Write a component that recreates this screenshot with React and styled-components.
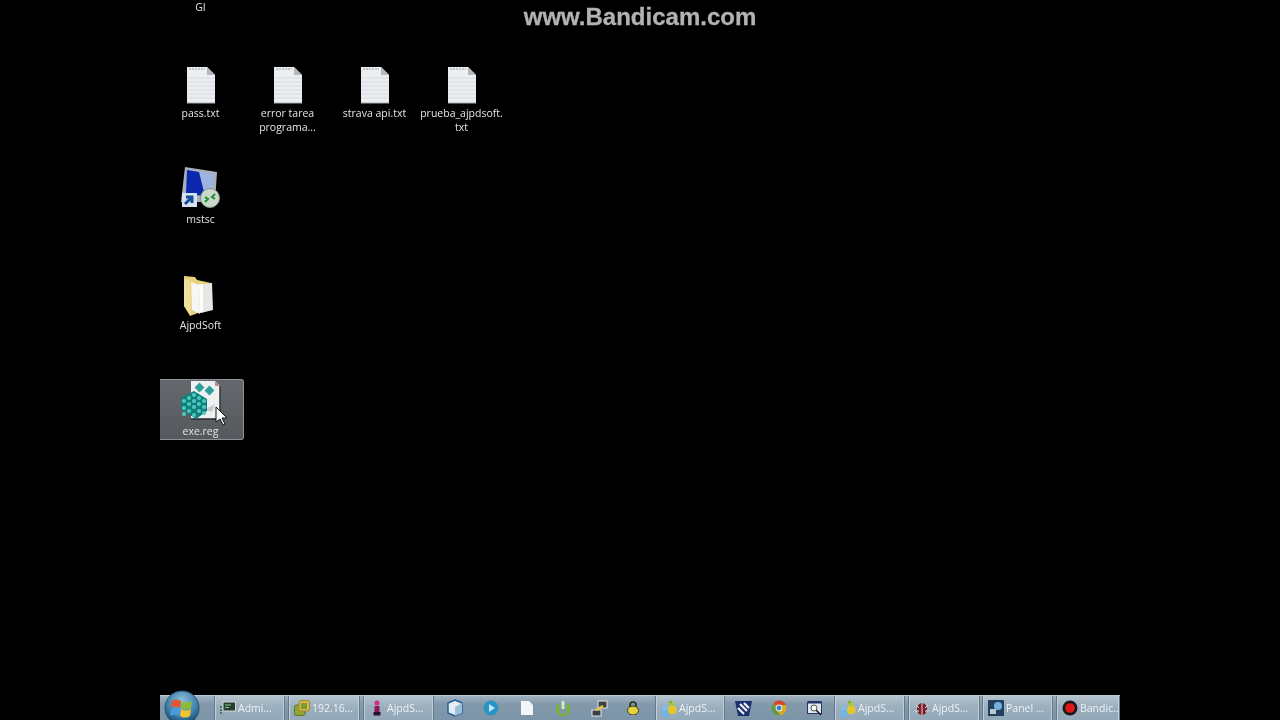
import React from "react";
import styled, { createGlobalStyle } from "styled-components";

const GlobalStyle = createGlobalStyle`
  html, body {
    margin: 0;
    height: 100%;
    background: #000;
    overflow: hidden;
  }
  #root {
    height: 100%;
  }
`;

const FileIcon = () => (
  <svg width="30" height="38" viewBox="0 0 30 38">
    <path d="M1 1h20l8 8v28H1z" fill="#eceff2" />
    <path d="M21 1l8 8h-8z" fill="#b4b9be" />
    {[12, 16, 20, 24, 28, 32].map((y) => (
      <path key={y} d={`M1 ${y}h28`} stroke="#d6dae0" strokeWidth="1" />
    ))}
    <path d="M3 3h16" stroke="#c2c6ca" strokeWidth="2" strokeDasharray="2 1" />
    <path d="M1 37h28" stroke="#a4aaaf" strokeWidth="1" />
  </svg>
);

const RdpIcon = () => (
  <svg width="42" height="44" viewBox="0 0 42 44">
    <path d="M5 1l32 5-2 30H1z" fill="#a9b0bd" />
    <path d="M7 4l27 4-2 23-26-3z" fill="#9db4e2" />
    <path d="M7 4l12 2 6 24-19-2z" fill="#0b28ad" />
    <rect x="2" y="27" width="15" height="14" fill="#d8e1ee" />
    <path d="M5 38l6-6M6 31h6v6" stroke="#12509f" strokeWidth="3" fill="none" />
    <circle cx="30" cy="32" r="9.5" fill="#ccd8cc" stroke="#7f9684" />
    <path d="M25 36l3-3-3-2M35 28l-3 3 3 2" stroke="#1f9436" strokeWidth="2" fill="none" />
  </svg>
);

const FolderIcon = () => (
  <svg width="36" height="40" viewBox="0 0 36 40">
    <path d="M1 0l11 1 2 3 14 3v25L7 40 1 30z" fill="#e6d37c" />
    <path d="M1 3l6 2 1 34-7-9z" fill="#efe09a" />
    <path d="M8 6l8 3 1 29-8-4z" fill="#f6f6f4" />
    <path d="M17 9l12-2 1 27-12 3z" fill="#e6e6e4" />
    <path d="M16 8h4v28l-3 1z" fill="#fcfcfb" />
  </svg>
);

const cubeDots = [
  [12, 13], [7, 16], [17, 16], [2, 19], [12, 19], [22, 19],
  [7, 22], [17, 22], [2, 26], [12, 25], [22, 25],
  [7, 29], [17, 29], [12, 33], [2, 32], [22, 31],
];

const RegIcon = () => (
  <svg width="42" height="42" viewBox="0 0 42 42">
    <path d="M11 1h24l5 5v33H11z" fill="#eef0f1" />
    <path d="M35 1l5 5h-5z" fill="#b88f8a" />
    <path d="M11 39h29" stroke="#20262a" strokeWidth="1.5" />
    <path d="M40 6v33" stroke="#30363a" strokeWidth="1.5" />
    <path d="M24 30l11-6-3 8z" fill="#c8cccc" />
    {[[16, 4], [26, 7]].map(([x, y]) => (
      <rect key={x} x={x} y={y} width="7" height="7" fill="#2f9f9b" transform={`rotate(45 ${x + 3.5} ${y + 3.5})`} />
    ))}
    <path d="M14 11l13 8v12l-11 8-15-10V18z" fill="#0f7f7c" />
    {cubeDots.map(([x, y]) => (
      <circle key={`${x}-${y}`} cx={x + 2} cy={y + 2} r="2.1" fill="#4fc7bd" />
    ))}
  </svg>
);

const OrbIcon = () => (
  <svg width="36" height="36" viewBox="0 0 36 36">
    <defs>
      <radialGradient id="orb" cx="50%" cy="30%" r="70%">
        <stop offset="0%" stopColor="#8fc0dc" />
        <stop offset="65%" stopColor="#3b7fa8" />
        <stop offset="100%" stopColor="#12466c" />
      </radialGradient>
    </defs>
    <circle cx="18" cy="18" r="17" fill="url(#orb)" stroke="#2e5574" />
    <path d="M8 11q4-3 9 0l-1 7q-5-3-9 0z" fill="#e2562f" />
    <path d="M18 11q5 3 10 0l-1 7q-5 3-10 0z" fill="#8dbb3a" />
    <path d="M7 19q4-3 9 0l-1 7q-5-3-9 0z" fill="#4b9ae0" />
    <path d="M17 19q5 3 10 0l-1 7q-5 3-10 0z" fill="#f2c230" />
  </svg>
);

const TermIcon = () => (
  <svg width="16" height="15" viewBox="0 0 16 15">
    <rect x="3" y="1" width="12.5" height="9" fill="#2c3a34" stroke="#d2d8d8" />
    <path d="M5 4h6M5 6.5h4" stroke="#7fd08a" />
    <path d="M0 6h2M0 9h2M0 12h2" stroke="#2f6a3d" strokeWidth="1.5" />
  </svg>
);

const VmIcon = () => (
  <svg width="16" height="16" viewBox="0 0 16 16">
    <rect x="0.5" y="5" width="10.5" height="10.5" rx="2" fill="#8fa536" stroke="#5f7320" />
    <rect x="5" y="0.5" width="10.5" height="10.5" rx="2" fill="#d7b84c" stroke="#a08a2e" />
    <rect x="7" y="3" width="6" height="6" fill="#7a9a34" />
  </svg>
);

const FigureIcon = () => (
  <svg width="16" height="16" viewBox="0 0 16 16">
    <circle cx="8" cy="3" r="2.5" fill="#d42a82" />
    <rect x="5.5" y="6" width="5" height="6" fill="#8a1a5c" />
    <rect x="4.5" y="12" width="7" height="3.5" fill="#2a1030" />
  </svg>
);

const MsnIcon = () => (
  <svg width="16" height="17" viewBox="0 0 16 17">
    <circle cx="4" cy="8" r="2.6" fill="#7cc0ee" />
    <rect x="0.5" y="10" width="7" height="7" rx="3" fill="#6db6e8" />
    <circle cx="11" cy="4" r="2.6" fill="#a5c83a" />
    <rect x="7" y="6" width="8.5" height="8" rx="3" fill="#e4c52e" />
    <path d="M7 3l3-3 1 3z" fill="#7ba52a" />
  </svg>
);

const BugIcon = () => (
  <svg width="16" height="16" viewBox="0 0 16 16">
    <ellipse cx="8" cy="9" rx="5" ry="6" fill="#7a1e28" />
    <path d="M8 3v12M2 5l3 3M14 5l-3 3M1 11h4M15 11h-4" stroke="#e6dada" />
  </svg>
);

const PanelIcon = () => (
  <svg width="16" height="16" viewBox="0 0 16 16">
    <rect width="16" height="16" fill="#23415f" />
    <circle cx="10" cy="6" r="4" fill="#73b3dc" />
    <rect x="2" y="9" width="6" height="5" fill="#b9c7d2" />
  </svg>
);

const RecordIcon = () => (
  <svg width="16" height="16" viewBox="0 0 16 16">
    <circle cx="8" cy="8" r="7.5" fill="#1a1a1a" />
    <circle cx="8" cy="8" r="4.8" fill="#e01818" />
  </svg>
);

const CubeIcon = () => (
  <svg width="16" height="18" viewBox="0 0 16 18">
    <path d="M8 1l7 3v10l-7 3-7-3V4z" fill="#e6eef5" stroke="#1f5c92" strokeWidth="1.4" />
    <path d="M8 8l7-4v10l-7 3z" fill="#9cc0dc" />
  </svg>
);

const MediaIcon = () => (
  <svg width="16" height="16" viewBox="0 0 16 16">
    <circle cx="8" cy="8" r="7.5" fill="#2a93c6" />
    <path d="M6 4l6 4-6 4z" fill="#bfe4f4" />
  </svg>
);

const PageIcon = () => (
  <svg width="12" height="14" viewBox="0 0 12 14">
    <path d="M0 0h8l4 4v10H0z" fill="#f3f5f6" />
  </svg>
);

const TorrentIcon = () => (
  <svg width="16" height="16" viewBox="0 0 16 16">
    <path d="M1 5l3-1v6a4 4 0 0 0 8 0V4l3 1v5a7 6 0 0 1-14 0z" fill="#76b82e" />
    <path d="M8 1v8" stroke="#d7ecb6" strokeWidth="2.8" />
  </svg>
);

const PlugIcon = () => (
  <svg width="17" height="17" viewBox="0 0 17 17">
    <rect x="1" y="10" width="9" height="6" fill="#3a3f45" stroke="#e8e8e8" />
    <rect x="7" y="1" width="9" height="7" fill="#3a3f45" stroke="#e8e8e8" />
    <path d="M5 10l7-4" stroke="#f0c23a" strokeWidth="2.4" />
  </svg>
);

const LockIcon = () => (
  <svg width="12" height="14" viewBox="0 0 12 14">
    <path d="M3 6V4a3 3 0 0 1 6 0v2" stroke="#2a2a18" strokeWidth="1.6" fill="none" />
    <ellipse cx="6" cy="9.5" rx="5.5" ry="4.5" fill="#e6d23a" stroke="#3a3a18" />
  </svg>
);

const StampIcon = () => (
  <svg width="17" height="17" viewBox="0 0 17 17">
    <path d="M0 1h17l-3 15H3z" fill="#1c2f70" />
    <path d="M5 4l7 7M9 3l5 5M3 8l6 6" stroke="#f2f2f2" strokeWidth="2.2" />
  </svg>
);

const ChromeIcon = () => (
  <svg width="16" height="16" viewBox="0 0 16 16">
    <circle cx="8" cy="8" r="7.5" fill="#d9a92a" />
    <path d="M8 .5A7.5 7.5 0 0 1 14.9 5H8a3 3 0 0 0-2.8 2L2.6 2.8A7.5 7.5 0 0 1 8 .5z" fill="#d6432f" />
    <path d="M2.4 3l3.4 6.5L9 15.4A7.5 7.5 0 0 1 2.4 3z" fill="#5c9a44" />
    <circle cx="8" cy="8" r="3.4" fill="#e8eef2" />
    <circle cx="8" cy="8" r="2.4" fill="#3f7fc4" />
  </svg>
);

const ZoomIcon = () => (
  <svg width="16" height="16" viewBox="0 0 16 16">
    <rect x="0.5" y="2.5" width="14" height="11" fill="#dfe6ec" stroke="#27326b" />
    <rect x="0.5" y="1" width="14" height="2.5" fill="#27326b" />
    <circle cx="7" cy="8" r="3" fill="#f4f4f4" stroke="#555" />
    <path d="M9 10l5 5" stroke="#222" strokeWidth="1.6" />
  </svg>
);

const desktopItems = [
  { label: "GI" },
  null,
  null,
  null,
  { label: "pass.txt", icon: <FileIcon /> },
  { label: "error tarea programa...", icon: <FileIcon /> },
  { label: "strava api.txt", icon: <FileIcon /> },
  { label: "prueba_ajpdsoft. txt", icon: <FileIcon /> },
  { label: "mstsc", icon: <RdpIcon /> },
  null,
  null,
  null,
  { label: "AjpdSoft", icon: <FolderIcon /> },
  null,
  null,
  null,
  { label: "exe.reg", icon: <RegIcon />, selected: true },
];

const taskbarItems = [
  { type: "task", icon: <TermIcon />, label: "Admi...", width: 71 },
  { type: "task", icon: <VmIcon />, label: "192.16...", width: 72 },
  { type: "task", icon: <FigureIcon />, label: "AjpdS...", width: 71 },
  { type: "quick", icon: <CubeIcon /> },
  { type: "quick", icon: <MediaIcon /> },
  { type: "quick", icon: <PageIcon /> },
  { type: "quick", icon: <TorrentIcon /> },
  { type: "quick", icon: <PlugIcon /> },
  { type: "quick", icon: <LockIcon />, width: 38 },
  { type: "task", icon: <MsnIcon />, label: "AjpdS...", width: 70, after: 0 },
  { type: "quick", icon: <StampIcon /> },
  { type: "quick", icon: <ChromeIcon /> },
  { type: "quick", icon: <ZoomIcon />, width: 37 },
  { type: "task", icon: <MsnIcon />, label: "AjpdS...", width: 71 },
  { type: "task", icon: <BugIcon />, label: "AjpdS...", width: 72, after: 2 },
  { type: "task", icon: <PanelIcon />, label: "Panel ...", width: 71 },
  { type: "task", icon: <RecordIcon />, label: "Bandic...", width: 64 },
];

const Screen = styled.div`
  position: relative;
  width: 960px;
  height: 720px;
  margin: 0 auto;
  background: #000;
  overflow: hidden;
  display: flex;
  flex-direction: column;
  font-family: "Open Sans", "Noto Sans", sans-serif;
`;

const Watermark = styled.div`
  position: absolute;
  top: 3px;
  left: 0;
  right: 0;
  text-align: center;
  font-family: "Liberation Sans", Arial, sans-serif;
  font-weight: 700;
  font-size: 24px;
  line-height: 27px;
  color: #b2b2b2;
  -webkit-text-stroke: 0.3px #b2b2b2;
  filter: blur(0.4px);
`;

const DesktopGrid = styled.div`
  flex: 1;
  min-height: 0;
  margin-top: -45px;
  display: grid;
  grid-template-columns: repeat(4, 87px);
  grid-auto-rows: 106px;
  align-content: start;
`;

const Tile = styled.div`
  position: relative;
  box-sizing: border-box;
  width: 84px;
  height: 61px;
  padding-right: 2px;
  display: flex;
  flex-direction: column;
  align-items: center;
  border: ${(p) => (p.$selected ? "1px solid #8d9498" : "1px solid transparent")};
  border-left: none;
  border-radius: 0 3px 3px 0;
  background: ${(p) => (p.$selected ? "linear-gradient(#65696d, #55595d)" : "transparent")};
`;

const IconSlot = styled.div`
  flex: none;
  height: 42px;
  width: 100%;
  display: flex;
  align-items: flex-end;
  justify-content: center;
  filter: blur(0.35px);
`;

const TileLabel = styled.div`
  flex: none;
  width: 84px;
  margin-top: 2px;
  text-align: center;
  font-size: 10.5px;
  line-height: 14px;
  color: #e4e4e4;
  filter: blur(0.25px);
`;

const Cursor = styled.svg`
  position: absolute;
  left: 55px;
  top: 26px;
`;

const Taskbar = styled.div`
  position: relative;
  flex: none;
  height: 24px;
  display: flex;
  align-items: stretch;
  padding-left: 54px;
  background: linear-gradient(#9fb2c0, #8298ab 35%, #7d95a8);
  border-top: 1px solid #b8c6d0;
`;

const StartOrb = styled.div`
  position: absolute;
  left: 4px;
  top: -6px;
  height: 36px;
  display: flex;
`;

const TaskButton = styled.div`
  flex: none;
  box-sizing: border-box;
  width: ${(p) => p.$width}px;
  margin-right: ${(p) => p.$after ?? 3}px;
  padding-left: 5px;
  display: flex;
  align-items: center;
  gap: 2px;
  font-size: 10.5px;
  color: #eef2f5;
  white-space: nowrap;
  overflow: hidden;
  background: linear-gradient(#b4c3ce, #9bafbe 45%, #93a8b8);
  border-left: 1px solid #66798a;
  border-right: 1px solid #66798a;
  box-shadow: inset 1px 0 0 #c0ced8, inset -1px 0 0 #c0ced8;
  filter: blur(0.25px);

  svg {
    flex: none;
  }
`;

const QuickItem = styled.div`
  flex: none;
  width: ${(p) => p.$width || 36}px;
  display: flex;
  align-items: center;
  justify-content: ${(p) => (p.$width ? "flex-start" : "center")};
  padding-left: ${(p) => (p.$width ? "10px" : "0")};
  box-sizing: border-box;
  filter: blur(0.25px);
`;

const App = () => {
  return (
    <>
      <GlobalStyle />
      <Screen>
        <Watermark>www.Bandicam.com</Watermark>
        <DesktopGrid>
          {desktopItems.map((item, index) =>
            item ? (
              <Tile key={index} $selected={item.selected}>
                <IconSlot>{item.icon}</IconSlot>
                <TileLabel>{item.label}</TileLabel>
                {item.selected && (
                  <Cursor width="12" height="20" viewBox="0 0 12 20">
                    <path d="M1 1v15l4-3 3 6 2-1-3-6h5z" fill="#fff" stroke="#111" />
                  </Cursor>
                )}
              </Tile>
            ) : (
              <div key={index} />
            )
          )}
        </DesktopGrid>
        <Taskbar>
          <StartOrb>
            <OrbIcon />
          </StartOrb>
          {taskbarItems.map((item, index) =>
            item.type === "task" ? (
              <TaskButton key={index} $width={item.width} $after={item.after}>
                {item.icon}
                {item.label}
              </TaskButton>
            ) : (
              <QuickItem key={index} $width={item.width}>
                {item.icon}
              </QuickItem>
            )
          )}
        </Taskbar>
      </Screen>
    </>
  );
};

export default App;
